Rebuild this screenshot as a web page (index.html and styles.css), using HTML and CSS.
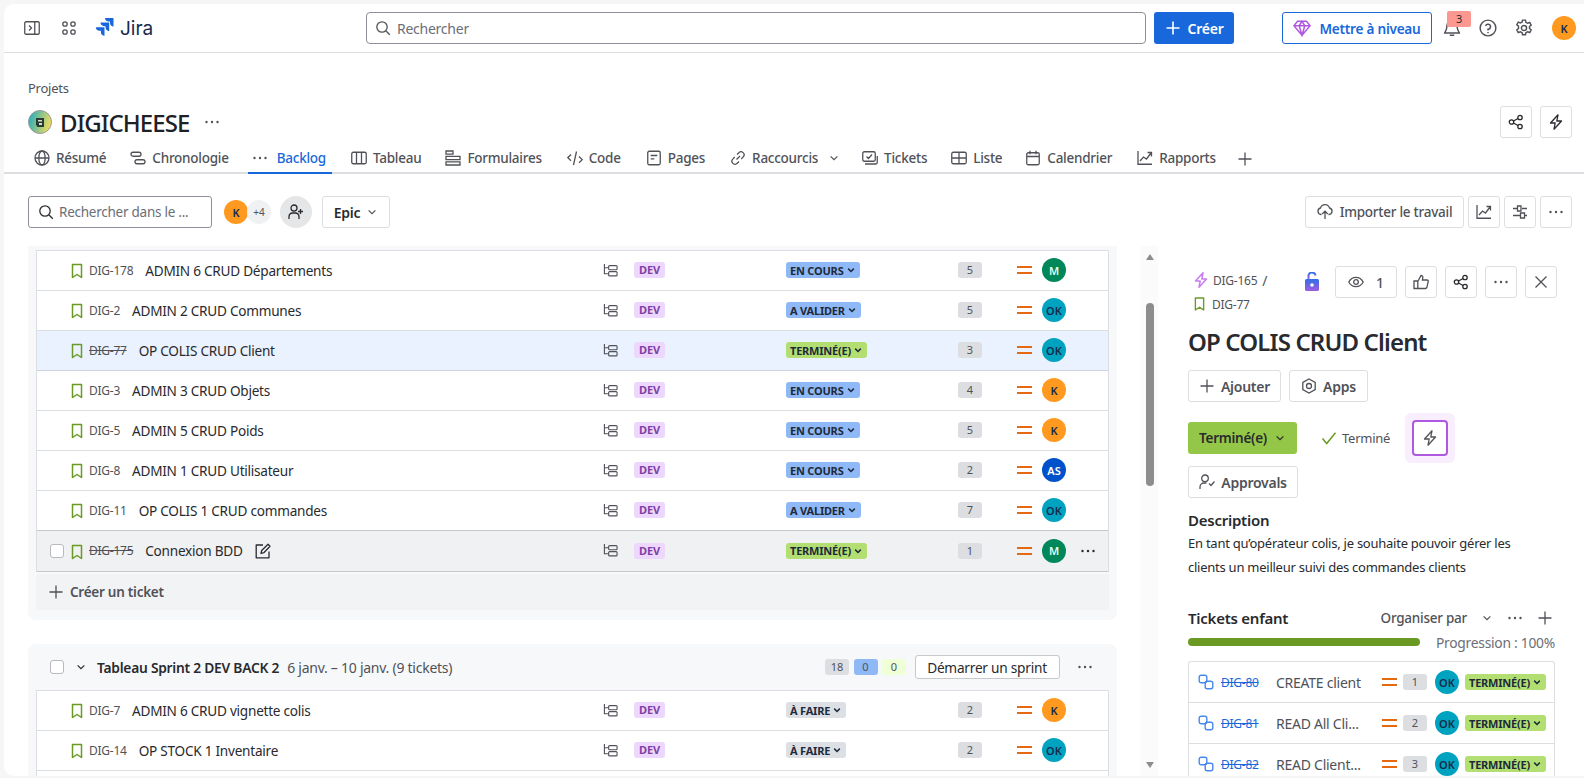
FILE: index.html
```html
<!DOCTYPE html>
<html lang="fr">
<head>
  <meta charset="utf-8">
  <title>DIGICHEESE - Backlog - Jira</title>
  <link rel="stylesheet" href="styles.css">
</head>
<body>
  <svg class="sprite" width="0" height="0">
    <defs>
      <linearGradient id="projectGrad" x1="0" y1="0" x2="1" y2="0.3">
        <stop offset="0" stop-color="#16a9c4"/><stop offset="1" stop-color="#e6da62"/>
      </linearGradient>
      <linearGradient id="lockGrad" x1="0" y1="0" x2="0" y2="1">
        <stop offset="0" stop-color="#2f6fe6"/><stop offset="1" stop-color="#a05ce0"/>
      </linearGradient>
    </defs>
    <symbol id="i-panel" viewBox="0 0 16 16"><rect x="0.75" y="1.75" width="14.5" height="12.5" rx="1.2"/><path d="M10.75 2v12M5 5.5 7.5 8 5 10.5"/></symbol>
    <symbol id="i-apps" viewBox="0 0 16 16"><circle cx="4" cy="4" r="2.2"/><circle cx="12" cy="4" r="2.2"/><circle cx="4" cy="12" r="2.2"/><circle cx="12" cy="12" r="2.2"/></symbol>
    <symbol id="i-search" viewBox="0 0 16 16"><circle cx="7" cy="7" r="5.2"/><path d="m11 11 3.8 3.8"/></symbol>
    <symbol id="i-plus" viewBox="0 0 16 16"><path d="M8 1.5v13M1.5 8h13"/></symbol>
    <symbol id="i-gem" viewBox="0 0 16 16"><path d="M4 2h8l3.2 4L8 14.5.8 6zM.8 6h14.4M5.5 6 8 14.5 10.5 6 8 2 5.5 6"/></symbol>
    <symbol id="i-bell" viewBox="0 0 16 16"><path d="M8 1.5a4.5 4.5 0 0 0-4.5 4.5c0 4-1.8 5.5-2 6.5h13c-.2-1-2-2.500-2-6.500A4.500 4.500 0 0 0 8 1.500zM6 14.500h4"/></symbol>
    <symbol id="i-help" viewBox="0 0 16 16"><circle cx="8" cy="8" r="7"/><path d="M5.900 6.200A2.200 2.200 0 1 1 8 9v1.200M8 11.600v1"/></symbol>
    <symbol id="i-gear" viewBox="0 0 16 16"><circle cx="8" cy="8" r="2.300"/><path d="M6.700 1h2.600l.4 2 1.500.8 1.900-.7 1.300 2.300-1.500 1.300v1.700l1.500 1.300-1.300 2.300-1.900-.7-1.500.9-.4 1.800H6.700l-.4-1.800-1.500-.9-1.900.7-1.300-2.300 1.500-1.300V6.400L1.600 5.100l1.300-2.300 1.900.7 1.500-.8z"/></symbol>
    <symbol id="i-dots" viewBox="0 0 16 16"><circle cx="2.500" cy="8" r="1.200" class="fill"/><circle cx="8" cy="8" r="1.200" class="fill"/><circle cx="13.500" cy="8" r="1.200" class="fill"/></symbol>
    <symbol id="i-share" viewBox="0 0 16 16"><circle cx="3.500" cy="8" r="2.200"/><circle cx="12" cy="3.500" r="2.200"/><circle cx="12" cy="12.500" r="2.200"/><path d="m5.500 7 4.500-2.500M5.500 9l4.500 2.500"/></symbol>
    <symbol id="i-bolt-plain" viewBox="0 0 16 16"><path d="M10 .8 2.500 9h4.700l-1.200 6.200L13.500 7H8.800z" stroke-linejoin="round"/></symbol>
    <symbol id="i-globe" viewBox="0 0 16 16"><circle cx="8" cy="8" r="7"/><ellipse cx="8" cy="8" rx="3.200" ry="7"/><path d="M1 8h14"/></symbol>
    <symbol id="i-timeline" viewBox="0 0 16 16"><rect x="1" y="2.250" width="10" height="4" rx="2"/><rect x="5" y="9.750" width="10" height="4" rx="2"/></symbol>
    <symbol id="i-board" viewBox="0 0 16 16"><rect x="0.750" y="2.250" width="14.500" height="11.500" rx="1.500"/><path d="M5.500 2.500v11M10.500 2.500v11"/></symbol>
    <symbol id="i-form" viewBox="0 0 16 16"><path d="M1 1h7v3.200H1zM1 6.400h14v3.200H1zM1 11.800h14V15H1z"/></symbol>
    <symbol id="i-code" viewBox="0 0 16 16"><path d="M4 4.500.8 7.700 4 10.800M12 6.500l3.200 3.100-3.200 3.100M9.500 1.500l-3 13.500"/></symbol>
    <symbol id="i-page" viewBox="0 0 16 16"><rect x="1.750" y="1.250" width="12.500" height="13.500" rx="1.500"/><path d="M4.700 5.500h6.600M4.700 8.800h3.600"/></symbol>
    <symbol id="i-link" viewBox="0 0 16 16"><path d="m6.500 9.500 3.500-3.500M7 4.500l1.800-1.800a3 3 0 0 1 4.400 4.200L11.300 9M9 11.500l-1.800 1.800a3 3 0 0 1-4.400-4.200L4.700 7"/></symbol>
    <symbol id="i-tickets" viewBox="0 0 16 16"><rect x="0.750" y="1.750" width="12.500" height="9.500" rx="1.500"/><path d="m4.500 6.500 2 2 3.500-4M15.250 6v6.500a1.500 1.500 0 0 1-1.500 1.500H3"/></symbol>
    <symbol id="i-table" viewBox="0 0 16 16"><rect x="0.750" y="2.250" width="14.500" height="11.500" rx="1.500"/><path d="M1 8h14M8 2.500v11"/></symbol>
    <symbol id="i-calendar" viewBox="0 0 16 16"><rect x="1.750" y="2.750" width="12.500" height="12" rx="1.500"/><path d="M2 6.500h12M5 .8v3.400M11 .8v3.400"/></symbol>
    <symbol id="i-chart" viewBox="0 0 16 16"><path d="M1 1v13.250h14M3 11l3.500-4 3 2L14 3M10.500 2.500H14.500V6.500"/></symbol>
    <symbol id="i-chevron" viewBox="0 0 16 16"><path d="m3.500 5.800 4.500 4.500 4.500-4.500"/></symbol>
    <symbol id="i-user-add" viewBox="0 0 16 16"><circle cx="6" cy="4" r="3"/><path d="M1 15v-2.500A3.500 3.500 0 0 1 4.500 9h3a3.500 3.500 0 0 1 3.500 3.500V15M12.500 5v5M10 7.500h5"/></symbol>
    <symbol id="i-upload" viewBox="0 0 16 16"><path d="M4.500 10.500H4a3.300 3.300 0 0 1-.5-6.500 4.700 4.700 0 0 1 9 0 3.300 3.300 0 0 1-.5 6.500h-.5M8 15V7.500M5.200 10 8 7.200l2.800 2.800"/></symbol>
    <symbol id="i-sliders" viewBox="0 0 16 16"><path d="M1 4.500h4M10 4.500h5M1 11.500h7M13 11.500h2M5.500 2h3.500v5H5.500zM8.500 9H12.500v5H8.500z"/></symbol>
    <symbol id="i-bookmark" viewBox="0 0 12 16"><path d="M1.500 1.500h9v13L6 11.500l-4.500 3z" stroke-linejoin="round"/></symbol>
    <symbol id="i-tree" viewBox="0 0 16 16"><path d="M1.500 1v10.500H5.500M1.500 5H5.500"/><rect x="6" y="2.750" width="9" height="4.500" rx="1"/><rect x="6" y="9.250" width="9" height="4.500" rx="1"/></symbol>
    <symbol id="i-edit" viewBox="0 0 16 16"><path d="M8 2H1.200v12.800H14V8.500M6 10.500l.7-3L13 1.300l2 2-6.200 6.400z" stroke-linejoin="round"/></symbol>
    <symbol id="i-eye" viewBox="0 0 16 16"><path d="M.8 8C2.500 4.800 5 3.300 8 3.300s5.500 1.500 7.200 4.700c-1.700 3.200-4.200 4.700-7.200 4.700S2.500 11.200.8 8z"/><circle cx="8" cy="8" r="2.300"/></symbol>
    <symbol id="i-like" viewBox="0 0 16 16"><path d="M4.800 7v7.500H1V7zM4.800 7.500 8 1.500c1.300 0 2 .9 1.800 2.100L9.400 6H14c.9 0 1.400.8 1.200 1.600l-1.300 5.700c-.2.700-.7 1.200-1.400 1.200H4.800"/></symbol>
    <symbol id="i-close" viewBox="0 0 16 16"><path d="m2.500 2.500 11 11M13.500 2.500l-11 11"/></symbol>
    <symbol id="i-apps-hex" viewBox="0 0 16 16"><path d="m8 1 6.200 3.500v7L8 15l-6.200-3.500v-7z"/><circle cx="8" cy="8" r="2.500"/></symbol>
    <symbol id="i-check" viewBox="0 0 16 16"><path d="m1.500 8.500 4.200 5L14.500 2.800"/></symbol>
    <symbol id="i-approve" viewBox="0 0 16 16"><circle cx="6" cy="4.300" r="3.300"/><path d="M1 15v-2a4 4 0 0 1 4-4h2.500M10 9.500l2 2 3.500-4"/></symbol>
    <symbol id="i-subtask" viewBox="0 0 16 16"><rect x="1.200" y="1.200" width="7.600" height="7.600" rx="2"/><rect x="7.200" y="7.200" width="7.600" height="7.600" rx="2"/></symbol>
  </svg>

  <div class="app">
    <header class="topbar">
      <div class="top-left">
        <svg class="icon"><use href="#i-panel"/></svg>
        <svg class="icon"><use href="#i-apps"/></svg>
        <div class="brand">
          <svg class="jira-logo" viewBox="0 0 20 20">
            <path fill="#1868db" d="M19 0h-8c0 2 1.600 3.600 3.500 3.600h1.500v1.500c0 2 1.500 3.500 3.500 3.500V.6c0-.3-.2-.6-.5-.6z"/>
            <path fill="#1868db" d="M14.700 4.600H6.500c0 2 1.600 3.600 3.600 3.600h1.500v1.400c0 2 1.600 3.600 3.600 3.600V5.100c0-.3-.2-.5-.5-.5z"/>
            <path fill="#1868db" d="M10 9.200H1.800c0 2 1.600 3.600 3.600 3.600h1.500v1.500c0 2 1.600 3.500 3.600 3.500V9.700c0-.3-.2-.5-.5-.5z"/>
          </svg>
          <span class="brand-name">Jira</span>
        </div>
      </div>
      <div class="global-search">
        <svg class="icon"><use href="#i-search"/></svg>
        <span>Rechercher</span>
      </div>
      <button class="btn-create"><svg class="icon"><use href="#i-plus"/></svg>Créer</button>
      <button class="btn-upgrade"><svg class="icon gem"><use href="#i-gem"/></svg>Mettre à niveau</button>
      <div class="top-right">
        <div class="bell">
          <svg class="icon"><use href="#i-bell"/></svg>
          <span class="bell-count">3</span>
        </div>
        <svg class="icon"><use href="#i-help"/></svg>
        <svg class="icon"><use href="#i-gear"/></svg>
        <span class="avatar av-k">K</span>
      </div>
    </header>

    <section class="project-head">
      <div class="crumb">Projets</div>
      <div class="project-row">
        <svg class="project-logo" viewBox="0 0 24 24">
          <circle cx="12" cy="12" r="11.500" fill="url(#projectGrad)" stroke="#999"/>
          <path fill="#2b3a34" d="M8 8h8v9H9.500L8 15z"/>
          <path fill="#cfe3c4" d="M10 10h4v1.500h-4zM11 13h3v2h-3z"/>
        </svg>
        <h1>DIGICHEESE</h1>
        <svg class="icon project-more"><use href="#i-dots"/></svg>
        <div class="project-actions">
          <button class="btn-icon"><svg class="icon dark"><use href="#i-share"/></svg></button>
          <button class="btn-icon"><svg class="icon dark"><use href="#i-bolt-plain"/></svg></button>
        </div>
      </div>
    </section>

    <nav class="tabs">
      <a class="tab t-resume"><svg class="icon"><use href="#i-globe"/></svg>Résumé</a>
      <a class="tab t-chrono"><svg class="icon"><use href="#i-timeline"/></svg>Chronologie</a>
      <a class="tab t-backlog active"><svg class="icon"><use href="#i-dots"/></svg>Backlog</a>
      <a class="tab t-tableau"><svg class="icon"><use href="#i-board"/></svg>Tableau</a>
      <a class="tab t-form"><svg class="icon"><use href="#i-form"/></svg>Formulaires</a>
      <a class="tab t-code"><svg class="icon"><use href="#i-code"/></svg>Code</a>
      <a class="tab t-pages"><svg class="icon"><use href="#i-page"/></svg>Pages</a>
      <a class="tab t-links"><svg class="icon"><use href="#i-link"/></svg>Raccourcis<svg class="icon tab-chevron"><use href="#i-chevron"/></svg></a>
      <a class="tab t-tickets"><svg class="icon"><use href="#i-tickets"/></svg>Tickets</a>
      <a class="tab t-liste"><svg class="icon"><use href="#i-table"/></svg>Liste</a>
      <a class="tab t-cal"><svg class="icon"><use href="#i-calendar"/></svg>Calendrier</a>
      <a class="tab t-rapports"><svg class="icon"><use href="#i-chart"/></svg>Rapports</a>
      <svg class="icon tab-plus"><use href="#i-plus"/></svg>
    </nav>

    <div class="toolbar">
      <div class="board-search">
        <svg class="icon dark"><use href="#i-search"/></svg>
        <span>Rechercher dans le ...</span>
      </div>
      <div class="people">
        <span class="avatar av-k">K</span>
        <span class="avatar av-more">+4</span>
      </div>
      <button class="btn-add-people"><svg class="icon dark"><use href="#i-user-add"/></svg></button>
      <button class="btn btn-epic">Epic<svg class="icon small"><use href="#i-chevron"/></svg></button>
      <div class="toolbar-right">
        <button class="btn btn-import"><svg class="icon"><use href="#i-upload"/></svg>Importer le travail</button>
        <button class="btn-icon"><svg class="icon"><use href="#i-chart"/></svg></button>
        <button class="btn-icon"><svg class="icon"><use href="#i-sliders"/></svg></button>
        <button class="btn-icon"><svg class="icon"><use href="#i-dots"/></svg></button>
      </div>
    </div>

    <main class="content">
      <div class="backlog">
        <section class="sprint sprint-cut">
          <div class="issues">
            <div class="row">
              <div class="row-main"><span class="check off"></span><svg class="bookmark"><use href="#i-bookmark"/></svg><span class="key">DIG-178</span><span class="summary">ADMIN 6 CRUD Départements</span></div>
              <svg class="icon tree"><use href="#i-tree"/></svg><div><span class="epic">DEV</span></div><div><span class="status st-blue">EN COURS<svg><use href="#i-chevron"/></svg></span></div><div><span class="est">5</span></div><span class="prio"></span><span class="avatar av-m">M</span>
            </div>
            <div class="row">
              <div class="row-main"><span class="check off"></span><svg class="bookmark"><use href="#i-bookmark"/></svg><span class="key">DIG-2</span><span class="summary">ADMIN 2 CRUD Communes</span></div>
              <svg class="icon tree"><use href="#i-tree"/></svg><div><span class="epic">DEV</span></div><div><span class="status st-blue">A VALIDER<svg><use href="#i-chevron"/></svg></span></div><div><span class="est">5</span></div><span class="prio"></span><span class="avatar av-ok">OK</span>
            </div>
            <div class="row selected">
              <div class="row-main"><span class="check off"></span><svg class="bookmark"><use href="#i-bookmark"/></svg><span class="key done">DIG-77</span><span class="summary">OP COLIS CRUD Client</span></div>
              <svg class="icon tree"><use href="#i-tree"/></svg><div><span class="epic">DEV</span></div><div><span class="status st-green">TERMINÉ(E)<svg><use href="#i-chevron"/></svg></span></div><div><span class="est">3</span></div><span class="prio"></span><span class="avatar av-ok">OK</span>
            </div>
            <div class="row">
              <div class="row-main"><span class="check off"></span><svg class="bookmark"><use href="#i-bookmark"/></svg><span class="key">DIG-3</span><span class="summary">ADMIN 3 CRUD Objets</span></div>
              <svg class="icon tree"><use href="#i-tree"/></svg><div><span class="epic">DEV</span></div><div><span class="status st-blue">EN COURS<svg><use href="#i-chevron"/></svg></span></div><div><span class="est">4</span></div><span class="prio"></span><span class="avatar av-k">K</span>
            </div>
            <div class="row">
              <div class="row-main"><span class="check off"></span><svg class="bookmark"><use href="#i-bookmark"/></svg><span class="key">DIG-5</span><span class="summary">ADMIN 5 CRUD Poids</span></div>
              <svg class="icon tree"><use href="#i-tree"/></svg><div><span class="epic">DEV</span></div><div><span class="status st-blue">EN COURS<svg><use href="#i-chevron"/></svg></span></div><div><span class="est">5</span></div><span class="prio"></span><span class="avatar av-k">K</span>
            </div>
            <div class="row">
              <div class="row-main"><span class="check off"></span><svg class="bookmark"><use href="#i-bookmark"/></svg><span class="key">DIG-8</span><span class="summary">ADMIN 1 CRUD Utilisateur</span></div>
              <svg class="icon tree"><use href="#i-tree"/></svg><div><span class="epic">DEV</span></div><div><span class="status st-blue">EN COURS<svg><use href="#i-chevron"/></svg></span></div><div><span class="est">2</span></div><span class="prio"></span><span class="avatar av-as">AS</span>
            </div>
            <div class="row">
              <div class="row-main"><span class="check off"></span><svg class="bookmark"><use href="#i-bookmark"/></svg><span class="key">DIG-11</span><span class="summary">OP COLIS 1 CRUD commandes</span></div>
              <svg class="icon tree"><use href="#i-tree"/></svg><div><span class="epic">DEV</span></div><div><span class="status st-blue">A VALIDER<svg><use href="#i-chevron"/></svg></span></div><div><span class="est">7</span></div><span class="prio"></span><span class="avatar av-ok">OK</span>
            </div>
            <div class="row hovered">
              <div class="row-main"><span class="check"></span><svg class="bookmark"><use href="#i-bookmark"/></svg><span class="key done">DIG-175</span><span class="summary">Connexion BDD</span><svg class="icon dark edit"><use href="#i-edit"/></svg></div>
              <svg class="icon tree"><use href="#i-tree"/></svg><div><span class="epic">DEV</span></div><div><span class="status st-green">TERMINÉ(E)<svg><use href="#i-chevron"/></svg></span></div><div><span class="est">1</span></div><span class="prio"></span><span class="avatar av-m">M</span><svg class="icon dark row-more"><use href="#i-dots"/></svg>
            </div>
          </div>
          <div class="create-ticket"><svg class="icon"><use href="#i-plus"/></svg>Créer un ticket</div>
        </section>

        <section class="sprint">
          <div class="sprint-head">
            <span class="check"></span>
            <svg class="icon small dark"><use href="#i-chevron"/></svg>
            <strong>Tableau Sprint 2 DEV BACK 2</strong>
            <span class="sprint-dates">6 janv. – 10 janv. (9 tickets)</span>
            <div class="sprint-right">
              <span class="est">18</span>
              <span class="est est-blue">0</span>
              <span class="est est-green">0</span>
              <button class="btn btn-start">Démarrer un sprint</button>
              <svg class="icon sprint-more"><use href="#i-dots"/></svg>
            </div>
          </div>
          <div class="issues">
            <div class="row">
              <div class="row-main"><span class="check off"></span><svg class="bookmark"><use href="#i-bookmark"/></svg><span class="key">DIG-7</span><span class="summary">ADMIN 6 CRUD vignette colis</span></div>
              <svg class="icon tree"><use href="#i-tree"/></svg><div><span class="epic">DEV</span></div><div><span class="status st-grey">À FAIRE<svg><use href="#i-chevron"/></svg></span></div><div><span class="est">2</span></div><span class="prio"></span><span class="avatar av-k">K</span>
            </div>
            <div class="row">
              <div class="row-main"><span class="check off"></span><svg class="bookmark"><use href="#i-bookmark"/></svg><span class="key">DIG-14</span><span class="summary">OP STOCK 1 Inventaire</span></div>
              <svg class="icon tree"><use href="#i-tree"/></svg><div><span class="epic">DEV</span></div><div><span class="status st-grey">À FAIRE<svg><use href="#i-chevron"/></svg></span></div><div><span class="est">2</span></div><span class="prio"></span><span class="avatar av-ok">OK</span>
            </div>
            <div class="row"></div>
          </div>
        </section>
      </div>

      <div class="scrollbar">
        <span class="arrow-up"></span>
        <span class="thumb"></span>
        <span class="arrow-down"></span>
      </div>

      <aside class="detail">
        <div class="detail-top">
          <div class="detail-crumbs">
            <div class="detail-crumb"><svg class="icon bolt-purple"><use href="#i-bolt-plain"/></svg><span>DIG-165</span><span class="slash">/</span></div>
            <div class="detail-crumb"><svg class="bookmark"><use href="#i-bookmark"/></svg><span>DIG-77</span></div>
          </div>
          <svg class="lock" viewBox="0 0 14 20">
            <path fill="none" stroke="url(#lockGrad)" stroke-width="2" d="M3.500 7V4.500a3.500 3.500 0 0 1 7-1"/>
            <path fill="url(#lockGrad)" d="M1.500 7h11A1.500 1.500 0 0 1 14 8.500v9a1.500 1.500 0 0 1-1.500 1.500h-11A1.500 1.500 0 0 1 0 17.500v-9A1.500 1.500 0 0 1 1.500 7z"/>
            <circle cx="7" cy="13" r="1.800" fill="#fff"/>
          </svg>
          <button class="btn btn-watch"><svg class="icon"><use href="#i-eye"/></svg>1</button>
          <button class="btn-icon"><svg class="icon"><use href="#i-like"/></svg></button>
          <button class="btn-icon"><svg class="icon dark"><use href="#i-share"/></svg></button>
          <button class="btn-icon"><svg class="icon"><use href="#i-dots"/></svg></button>
          <button class="btn-icon"><svg class="icon"><use href="#i-close"/></svg></button>
        </div>
        <h2>OP COLIS CRUD Client</h2>
        <div class="detail-actions">
          <button class="btn btn-add"><svg class="icon"><use href="#i-plus"/></svg>Ajouter</button>
          <button class="btn btn-apps"><svg class="icon"><use href="#i-apps-hex"/></svg>Apps</button>
        </div>
        <div class="status-line">
          <button class="btn-status">Terminé(e)<svg class="icon small dark"><use href="#i-chevron"/></svg></button>
          <span class="resolved"><svg class="icon check-green"><use href="#i-check"/></svg>Terminé</span>
          <span class="auto-wrap"><span class="auto-box"><svg class="icon"><use href="#i-bolt-plain"/></svg></span></span>
        </div>
        <button class="btn btn-approvals"><svg class="icon"><use href="#i-approve"/></svg>Approvals</button>
        <h3>Description</h3>
        <p class="desc">En tant qu’opérateur colis, je souhaite pouvoir gérer les clients un meilleur suivi des commandes clients</p>
        <div class="children-head">
          <strong>Tickets enfant</strong>
          <span class="organize">Organiser par</span>
          <svg class="icon small"><use href="#i-chevron"/></svg>
          <svg class="icon"><use href="#i-dots"/></svg>
          <svg class="icon"><use href="#i-plus"/></svg>
        </div>
        <div class="progress-line">
          <span class="progress-bar"></span>
          <span class="progress-text">Progression : 100%</span>
        </div>
        <div class="children">
          <div class="child">
            <svg class="icon subtask"><use href="#i-subtask"/></svg><span class="child-key">DIG-80</span><span class="child-name">CREATE client</span><span class="prio"></span><span class="est">1</span><span class="avatar av-ok">OK</span><span class="status st-green">TERMINÉ(E)<svg><use href="#i-chevron"/></svg></span>
          </div>
          <div class="child">
            <svg class="icon subtask"><use href="#i-subtask"/></svg><span class="child-key">DIG-81</span><span class="child-name">READ All Cli...</span><span class="prio"></span><span class="est">2</span><span class="avatar av-ok">OK</span><span class="status st-green">TERMINÉ(E)<svg><use href="#i-chevron"/></svg></span>
          </div>
          <div class="child">
            <svg class="icon subtask"><use href="#i-subtask"/></svg><span class="child-key">DIG-82</span><span class="child-name">READ Client...</span><span class="prio"></span><span class="est">3</span><span class="avatar av-ok">OK</span><span class="status st-green">TERMINÉ(E)<svg><use href="#i-chevron"/></svg></span>
          </div>
        </div>
      </aside>
    </main>
  </div>
</body>
</html>
```

FILE: styles.css
```css
* {
  box-sizing: border-box;
}
html, body {
  height: 100%;
}
body {
  margin: 0;
  padding: 4px 0 2px 4px;
  overflow: hidden;
  background-color: #f6f6f6;
  color: #292a2e;
  font-family: "Noto Sans", "Open Sans", sans-serif;
  font-size: 14px;
  letter-spacing: -0.25px;
}
.sprite {
  position: absolute;
}
button {
  font: inherit;
  letter-spacing: inherit;
  color: inherit;
  cursor: pointer;
}
h1, h2, h3, p {
  margin: 0;
}

/* icons */
.icon {
  display: block;
  flex: none;
  width: 16px;
  height: 16px;
  fill: none;
  stroke: #505258;
  stroke-width: 1.3;
  color: #505258;
}
.fill {
  fill: currentColor;
  stroke: none;
}
.icon.dark {
  stroke: #292a2e;
  color: #292a2e;
}
.icon.small {
  width: 12px;
  height: 12px;
  stroke-width: 1.6;
}
.bookmark {
  flex: none;
  width: 12px;
  height: 16px;
  fill: none;
  stroke: #6a9a23;
  stroke-width: 1.5;
}

.app {
  height: 100%;
  display: flex;
  flex-direction: column;
  background-color: #fff;
  border-radius: 10px 0 0 10px;
  overflow: hidden;
}

/* top bar */
.topbar {
  flex: none;
  height: 49px;
  display: flex;
  align-items: center;
  padding-right: 8px;
  border-bottom: 1px solid #dddee1;
}
.top-left {
  flex: none;
  width: 362px;
  display: flex;
  align-items: center;
  gap: 21px;
  padding-left: 20px;
}
.brand {
  display: flex;
  align-items: center;
  gap: 6px;
  margin-left: -4px;
}
.jira-logo {
  width: 20px;
  height: 20px;
}
.brand-name {
  font-size: 19px;
  letter-spacing: 0;
  color: #172b4d;
  font-family: "Inter", sans-serif;
  font-weight: 400;
}
.global-search {
  flex: 1;
  height: 32px;
  display: flex;
  align-items: center;
  gap: 6px;
  padding-left: 8px;
  border: 1px solid #8c8f97;
  border-radius: 4px;
  color: #6b6e76;
}
.btn-create {
  flex: none;
  width: 80px;
  height: 32px;
  margin-left: 8px;
  display: flex;
  align-items: center;
  justify-content: center;
  gap: 7px;
  border: 0;
  border-radius: 3px;
  background-color: #1868db;
  color: #fff;
  font-weight: 600;
}
.btn-create .icon {
  stroke: #fff;
  stroke-width: 1.6;
}
.btn-upgrade {
  flex: none;
  width: 150px;
  height: 32px;
  margin-left: 48px;
  display: flex;
  align-items: center;
  justify-content: center;
  gap: 8px;
  border: 1px solid #1868db;
  border-radius: 3px;
  background-color: #fff;
  color: #1868db;
  font-size: 13.6px;
  font-weight: 600;
}
.icon.gem {
  width: 18px;
  height: 18px;
  stroke: #af59e1;
}
.top-right {
  display: flex;
  align-items: center;
  gap: 18px;
  margin-left: 11px;
}
.top-right .icon {
  width: 18px;
  height: 18px;
}
.bell {
  position: relative;
}
.bell-count {
  position: absolute;
  left: 4px;
  top: -8px;
  width: 24px;
  height: 16px;
  background-color: #fd9891;
  border-radius: 2px;
  text-align: center;
  font-size: 11px;
  line-height: 15px;
  color: #292a2e;
}
.top-right .avatar {
  margin-left: 1px;
}

/* avatars and small labels */
.avatar {
  flex: none;
  display: inline-flex;
  align-items: center;
  justify-content: center;
  width: 24px;
  height: 24px;
  border-radius: 50%;
  font-size: 11px;
  font-weight: 600;
  letter-spacing: 0;
}
.av-k {
  background-color: #ff991f;
  color: #172b4d;
}
.av-ok {
  background-color: #00a3bf;
  color: #172b4d;
}
.av-m {
  background-color: #00875a;
  color: #e3fcef;
}
.av-as {
  background-color: #0052cc;
  color: #fff;
}
.av-more {
  background-color: #f0f1f2;
  color: #505258;
  font-size: 10px;
  font-weight: 400;
  margin-left: -1px;
}

/* project header */
.project-head {
  flex: none;
  padding: 25px 12px 0 24px;
}
.crumb {
  font-size: 13px;
  line-height: 20px;
  color: #505258;
}
.project-row {
  height: 31px;
  margin-top: 8px;
  display: flex;
  align-items: center;
}
.project-logo {
  flex: none;
  width: 24px;
  height: 24px;
}
h1 {
  margin-left: 8px;
  padding-top: 1px;
  font-size: 24px;
  font-weight: 500;
  letter-spacing: -0.9px;
  color: #1d2125;
}
.project-more {
  margin-left: 15px;
}
.project-actions {
  margin-left: auto;
  display: flex;
  gap: 8px;
}
.btn-icon {
  flex: none;
  width: 32px;
  height: 32px;
  padding: 0;
  display: flex;
  align-items: center;
  justify-content: center;
  background-color: #fff;
  border: 1px solid #dddee1;
  border-radius: 3px;
}
.btn {
  height: 32px;
  display: inline-flex;
  align-items: center;
  background-color: #fff;
  border: 1px solid #dddee1;
  border-radius: 3px;
  color: #505258;
  font-weight: 500;
}

/* tabs */
.tabs {
  flex: none;
  height: 30px;
  margin-top: 7px;
  padding-left: 30px;
  display: flex;
  align-items: flex-start;
  border-bottom: 2px solid #dddee1;
  font-size: 13.5px;
}
.tab {
  height: 30px;
  display: flex;
  align-items: center;
  gap: 6px;
  color: #505258;
  font-weight: 500;
  border-bottom: 2px solid transparent;
}
.tab.active {
  color: #1868db;
  border-bottom-color: #1868db;
  padding: 0 6px 0 4px;
  gap: 9px;
}
.t-chrono { margin-left: 24px; }
.t-backlog { margin-left: 19px; }
.t-tableau { margin-left: 19px; }
.t-form { margin-left: 24px; }
.t-code { margin-left: 25px; }
.t-pages { margin-left: 25px; }
.t-links { margin-left: 25px; }
.t-tickets { margin-left: 22px; }
.t-liste { margin-left: 24px; }
.t-cal { margin-left: 23px; }
.t-rapports { margin-left: 25px; }
.tab-chevron {
  width: 12px;
  height: 12px;
  margin-left: 4px;
  stroke-width: 1.6;
}
.tab-plus {
  margin: 7px 0 0 21px;
}

/* toolbar */
.toolbar {
  flex: none;
  height: 32px;
  margin-top: 22px;
  padding: 0 12px 0 24px;
  display: flex;
  align-items: center;
}
.board-search {
  width: 184px;
  height: 32px;
  display: flex;
  align-items: center;
  gap: 5px;
  padding-left: 9px;
  border: 1px solid #8c8f97;
  border-radius: 3px;
  font-size: 13.5px;
  color: #6b6e76;
}
.people {
  margin-left: 12px;
  display: flex;
}
.btn-add-people {
  width: 32px;
  height: 32px;
  margin-left: 9px;
  padding: 0;
  display: flex;
  align-items: center;
  justify-content: center;
  border: 0;
  border-radius: 50%;
  background-color: #e5e6e8;
}
.btn-epic {
  margin-left: 10px;
  width: 68px;
  justify-content: center;
  gap: 6px;
  font-weight: 600;
  color: #292a2e;
}
.toolbar-right {
  margin-left: auto;
  display: flex;
  gap: 4px;
}
.btn-import {
  width: 159px;
  justify-content: center;
  gap: 7px;
  font-size: 13.5px;
}

/* backlog list */
.content {
  flex: 1;
  min-height: 0;
  margin-top: 18px;
  display: flex;
  overflow: hidden;
}
.backlog {
  flex: none;
  width: 1089px;
  margin-left: 24px;
}
.sprint {
  padding: 0 8px;
  background-color: #f7f8f9;
  border-radius: 8px;
}
.sprint-cut {
  padding: 4px 8px 10px;
  margin-bottom: 24px;
  border-radius: 0 0 8px 8px;
}
.issues {
  background-color: #fff;
  border: 1px solid #dddee1;
  border-width: 1px 1px 0;
}
.row {
  height: 40px;
  padding-bottom: 1px;
  display: grid;
  grid-template-columns: 566px 31px 152px 172px 59px 25px 38px 1fr;
  align-items: center;
  border-bottom: 1px solid #dddee1;
  background-color: #fff;
}
.row > div {
  display: flex;
  align-items: center;
}
.row.selected {
  background-color: #e9f2fe;
  border-color: #cdd4de;
}
.row.hovered {
  height: 41px;
  background-color: #f0f1f2;
  border-color: #c6c8cc;
  box-shadow: 0 -1px 0 #c6c8cc;
}
.row-main {
  padding-left: 13px;
}
.check {
  flex: none;
  width: 14px;
  height: 14px;
  margin-right: 7px;
  border: 1px solid #b7b9be;
  border-radius: 3px;
  background-color: #fff;
}
.check.off {
  visibility: hidden;
}
.row-main .bookmark {
  margin-top: 2px;
}
.key {
  margin-left: 6px;
  font-size: 12px;
  color: #505258;
}
.key.done {
  text-decoration: line-through;
}
.summary {
  margin-left: 12px;
  font-size: 13.6px;
}
.edit {
  margin-left: 12px;
}
.tree {
  width: 15px;
  height: 15px;
  stroke-width: 1.2;
}
.epic {
  display: inline-block;
  height: 16px;
  padding: 0 5px;
  border-radius: 3px;
  background-color: #eed7fc;
  color: #803fa5;
  font-size: 11px;
  font-weight: 700;
  line-height: 16px;
  letter-spacing: -0.1px;
}
.status {
  display: inline-flex;
  align-items: center;
  height: 16px;
  padding: 0 4px;
  border-radius: 3px;
  color: #1e2a3a;
  font-size: 11px;
  font-weight: 700;
  letter-spacing: -0.2px;
  white-space: nowrap;
}
.status svg {
  width: 10px;
  height: 10px;
  margin-left: 2px;
  fill: none;
  stroke: currentColor;
  stroke-width: 2.4;
}
.st-blue {
  background-color: #8fb8f6;
}
.st-green {
  background-color: #b3df72;
}
.st-grey {
  background-color: #dcdfe4;
}
.est {
  display: inline-block;
  width: 24px;
  height: 16px;
  border-radius: 3px;
  background-color: #dddee1;
  color: #505258;
  font-size: 11px;
  line-height: 16px;
  text-align: center;
  letter-spacing: 0;
}
.est-blue {
  background-color: #8fb8f6;
}
.est-green {
  background-color: #efffd6;
}
.prio {
  flex: none;
  width: 15px;
  height: 8px;
  border-top: 2px solid #e56910;
  border-bottom: 2px solid #e56910;
}
.create-ticket {
  height: 36px;
  margin-top: 2px;
  padding-left: 12px;
  display: flex;
  align-items: center;
  gap: 6px;
  background-color: #f2f3f4;
  font-size: 13.5px;
  font-weight: 600;
  color: #505258;
}

/* second sprint */
.sprint-head {
  height: 46px;
  padding-left: 14px;
  display: flex;
  align-items: center;
}
.sprint-head .check {
  margin-right: 11px;
}
.sprint-head strong {
  margin-left: 10px;
  font-size: 13.8px;
  font-weight: 600;
}
.sprint-dates {
  margin-left: 8px;
  color: #505258;
}
.sprint-right {
  margin-left: auto;
  display: flex;
  align-items: center;
  gap: 4.5px;
}
.btn-start {
  height: 24px;
  width: 145px;
  margin-left: 4px;
  justify-content: center;
  color: #292a2e;
  font-weight: 400;
  border-color: #c6c8cc;
  font-size: 13.7px;
}
.sprint-more {
  margin: 0 16px 0 13px;
}

/* scrollbar */
.scrollbar {
  flex: none;
  width: 17px;
  margin-left: 24px;
  padding-top: 8px;
  padding-bottom: 8px;
  display: flex;
  flex-direction: column;
  align-items: center;
  background-color: #fbfbfb;
}
.arrow-up, .arrow-down {
  width: 0;
  height: 0;
  border-left: 4.500px solid transparent;
  border-right: 4.500px solid transparent;
}
.arrow-up {
  border-bottom: 6px solid #8d8d8d;
}
.arrow-down {
  margin-top: auto;
  border-top: 6px solid #8d8d8d;
}
.thumb {
  width: 8px;
  height: 183px;
  margin-top: 43px;
  border-radius: 4px;
  background-color: #8d8d8d;
}

/* detail panel */
.detail {
  flex: 1;
  padding: 20px 27px 0 30px;
  overflow: hidden;
}
.detail-top {
  display: flex;
  align-items: flex-start;
  gap: 8px;
}
.detail-crumbs {
  width: 117px;
  margin-right: -8px;
  padding-left: 5px;
  font-size: 12px;
  color: #505258;
}
.detail-crumb {
  height: 24px;
  display: flex;
  align-items: center;
  gap: 4px;
  padding-top: 4px;
}
.detail-crumb .bookmark {
  width: 11px;
  margin: 0 3px 0 1px;
}
.bolt-purple {
  stroke: #c97cf4;
  stroke-width: 1.5;
}
.slash {
  font-size: 14px;
  margin-left: 1px;
}
.lock {
  flex: none;
  width: 14px;
  height: 20px;
  margin: 6px 8px 0 0;
}
.btn-watch {
  width: 62px;
  justify-content: center;
  gap: 12px;
}
h2 {
  margin-top: 12px;
  font-size: 24px;
  line-height: 32px;
  font-weight: 600;
  letter-spacing: -0.85px;
}
.detail-actions {
  margin-top: 12px;
  display: flex;
  gap: 8px;
}
.btn-add, .btn-apps, .btn-approvals {
  justify-content: center;
  gap: 6px;
  font-weight: 600;
}
.btn-add {
  width: 93px;
}
.btn-apps {
  width: 79px;
}
.status-line {
  margin-top: 11px;
  height: 50px;
  display: flex;
  align-items: center;
}
.btn-status {
  width: 109px;
  height: 32px;
  display: flex;
  align-items: center;
  justify-content: center;
  gap: 7px;
  border: 0;
  border-radius: 3px;
  background-color: #94c748;
  font-weight: 600;
  font-size: 13.5px;
}
.resolved {
  margin-left: 24px;
  display: flex;
  align-items: center;
  gap: 5px;
  font-size: 13px;
  color: #505258;
}
.icon.check-green {
  stroke: #6a9a23;
  stroke-width: 1.5;
}
.auto-wrap {
  margin-left: 15px;
  width: 50px;
  height: 50px;
  display: flex;
  align-items: center;
  justify-content: center;
  background-color: #f8eefe;
  border-radius: 6px;
}
.auto-box {
  width: 36px;
  height: 36px;
  display: flex;
  align-items: center;
  justify-content: center;
  background-color: #fff;
  border: 2px solid #af59e1;
  border-radius: 4px;
}
.btn-approvals {
  display: flex;
  width: 110px;
  margin-top: 3px;
}
h3 {
  margin-top: 12px;
  font-size: 15px;
  line-height: 20px;
  font-weight: 600;
}
.desc {
  width: 350px;
  margin-top: 1px;
  font-size: 13px;
  line-height: 24px;
  color: #292a2e;
}
.children-head {
  margin-top: 29px;
  height: 20px;
  margin-right: 4px;
  display: flex;
  align-items: center;
  gap: 14px;
}
.children-head strong {
  font-weight: 600;
  font-size: 15px;
  margin-right: auto;
}
.organize {
  color: #505258;
  font-weight: 500;
  font-size: 13.5px;
}
.progress-line {
  margin-top: 4px;
  height: 20px;
  display: flex;
  align-items: center;
}
.progress-bar {
  width: 232px;
  height: 8px;
  border-radius: 4px;
  background-color: #6a9a23;
}
.progress-text {
  margin-left: 16px;
  color: #6b6e76;
  font-size: 13.8px;
  white-space: nowrap;
}
.children {
  margin: 9px 2px 0 0;
  border: 1px solid #dddee1;
  border-bottom: 0;
  border-radius: 3px 3px 0 0;
}
.child {
  height: 41px;
  padding-left: 9px;
  display: flex;
  align-items: center;
  border-bottom: 1px solid #dddee1;
}
.icon.subtask {
  stroke: #4688ec;
  stroke-width: 1.4;
}
.child-key {
  width: 55px;
  margin-left: 7px;
  color: #1868db;
  font-size: 12px;
  text-decoration: line-through;
}
.child-name {
  width: 106px;
  font-size: 14px;
  color: #505258;
  white-space: nowrap;
}
.child .est {
  margin-left: 6px;
}
.child .avatar {
  margin-left: 8px;
}
.child .status {
  margin-left: 6px;
}
```
